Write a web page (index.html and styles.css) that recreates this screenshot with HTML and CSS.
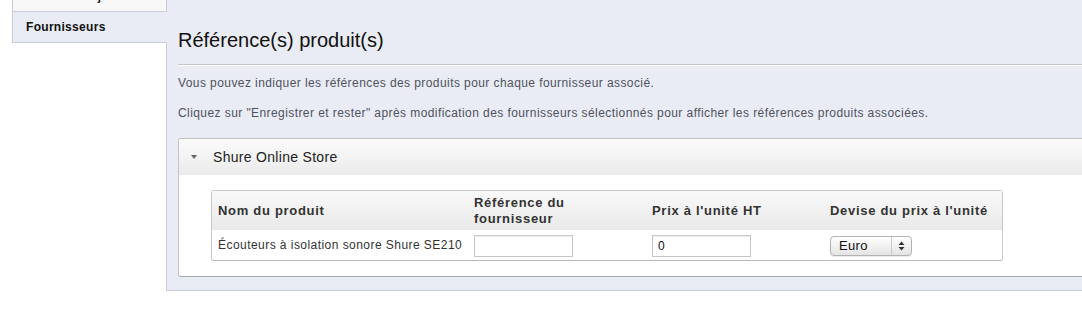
FILE: index.html
```html
<!DOCTYPE html>
<html lang="fr">
<head>
  <meta charset="UTF-8" />
  <title>Fournisseurs</title>
  <link rel="stylesheet" href="styles.css">
</head>
<body>
  <div class="page">
    <div class="tabs">
      <div class="tab">Documents joints</div>
      <div class="tab selected">Fournisseurs</div>
    </div>
    <div class="main">
      <h2>Référence(s) produit(s)</h2>
      <div class="separator"></div>
      <p class="hint">Vous pouvez indiquer les références des produits pour chaque fournisseur associé.</p>
      <p class="hint second">Cliquez sur "Enregistrer et rester" après modification des fournisseurs sélectionnés pour afficher les références produits associées.</p>

      <div class="panel">
        <div class="panel-head">
          <span class="caret"></span>
          Shure Online Store
        </div>
        <div class="panel-body">
          <table class="refs">
            <thead>
              <tr>
                <th class="c-name">Nom du produit</th>
                <th class="c-col">Référence du<br>fournisseur</th>
                <th class="c-col">Prix à l'unité HT</th>
                <th class="c-col">Devise du prix à l'unité</th>
              </tr>
            </thead>
            <tbody>
              <tr>
                <td class="product">Écouteurs à isolation sonore Shure SE210</td>
                <td><input type="text" class="field" value=""></td>
                <td><input type="text" class="field" value="0"></td>
                <td>
                  <span class="popup">
                    <select><option>Euro</option></select>
                    <span class="arrows">
                      <svg width="7" height="10" viewBox="0 0 7 10"><path d="M3.5 0.5 L6.5 4 L0.5 4 Z M0.5 6 L6.5 6 L3.5 9.5 Z" fill="#333"/></svg>
                    </span>
                  </span>
                </td>
              </tr>
            </tbody>
          </table>
        </div>
      </div>
    </div>
  </div>
</body>
</html>
```

FILE: styles.css
```css
html, body {
  margin: 0;
  background: #fff;
  overflow: hidden;
}
body {
  font-family: "Liberation Sans", Arial, sans-serif;
  color: #333;
}
.page {
  display: flex;
  width: 1110px;
  margin-top: -19px;
}

/* onglets de gauche */
.tabs {
  width: 154px;
  margin-left: 12px;
}
.tab {
  height: 30px;
  line-height: 30px;
  padding: 0 13px;
  border-left: 1px solid #c9ccd6;
  border-bottom: 1px solid #c9ccd6;
  background: #f8f8f8;
  font-size: 12px;
  font-weight: bold;
  letter-spacing: 0.3px;
  color: #222;
}
.tab.selected {
  position: relative;
  margin-right: -1px;
  background: #e9ecf4;
  color: #111;
}

/* zone principale */
.main {
  flex: 1;
  background: #e9ecf4;
  border-left: 1px solid #c9ccd6;
  border-bottom: 1px solid #c9ccd6;
  padding: 0 0 13px 11px;
}
h2 {
  margin: 0;
  padding-top: 47px;
  font-size: 20px;
  line-height: 24px;
  font-weight: normal;
  color: #111;
}
.separator {
  margin-top: 12px;
  border-top: 1px solid #c4c5cb;
  border-bottom: 1px solid #fff;
}
.hint {
  margin: 9px 0 0;
  font-size: 12px;
  line-height: 16px;
  letter-spacing: 0.42px;
  color: #4f5260;
}
.hint.second {
  margin-top: 14px;
}

.panel {
  margin-top: 17px;
  background: #fff;
  border: 1px solid #c3c3c3;
  border-bottom-color: #ababab;
  border-radius: 3px;
}
.panel-head {
  display: flex;
  align-items: center;
  height: 36px;
  padding-left: 11px;
  background: linear-gradient(#fbfbfb, #ebebeb);
  border-radius: 3px 3px 0 0;
  font-size: 14px;
  letter-spacing: 0.3px;
  color: #222;
}
.caret {
  width: 0;
  height: 0;
  margin: 0 16px 1px 1px;
  border-left: 3px solid transparent;
  border-right: 3px solid transparent;
  border-top: 4px solid #666;
}
.panel-body {
  padding: 15px 0 15px 32px;
}

.refs {
  border-collapse: separate;
  border-spacing: 0;
  border: 1px solid #c8c8c8;
  border-bottom-color: #b8b8b8;
  border-radius: 3px;
  width: 792px;
  table-layout: fixed;
}
.refs th {
  height: 39px;
  padding: 0 6px;
  text-align: left;
  vertical-align: middle;
  font-size: 13px;
  line-height: 16px;
  letter-spacing: 0.7px;
  color: #333;
  background: linear-gradient(#f9f9f9, #e9e9e9);
}
.refs .c-name { width: 244px; }
.refs .c-col { width: 166px; }
.refs td {
  height: 30px;
  padding: 0 6px;
  font-size: 12px;
  letter-spacing: 0.45px;
  color: #333;
  vertical-align: middle;
}
.refs td.product {
  white-space: nowrap;
  overflow: visible;
}
.field {
  box-sizing: border-box;
  width: 99px;
  height: 22px;
  margin: 1px 0 0;
  padding: 0 5px;
  border: 1px solid #c6c6c6;
  box-shadow: inset 0 1px 1px rgba(0,0,0,0.08);
  font-family: "Liberation Sans", Arial, sans-serif;
  font-size: 12px;
  color: #111;
}
.popup {
  display: inline-flex;
  box-sizing: border-box;
  width: 82px;
  height: 20px;
  margin-top: 1px;
  vertical-align: middle;
  border: 1px solid #b3b3b3;
  border-radius: 4px;
  background: linear-gradient(#ffffff, #e4e4e4);
  box-shadow: 0 1px 1px rgba(0,0,0,0.08);
}
.popup select {
  flex: 1;
  min-width: 0;
  -webkit-appearance: none;
  appearance: none;
  border: 0;
  background: transparent;
  padding: 0 0 0 8px;
  font-family: "Liberation Sans", Arial, sans-serif;
  font-size: 13px;
  letter-spacing: 0.3px;
  color: #111;
  outline: none;
}
.arrows {
  display: flex;
  align-items: center;
  justify-content: center;
  width: 19px;
  border-left: 1px solid #cbcbcb;
}
```
